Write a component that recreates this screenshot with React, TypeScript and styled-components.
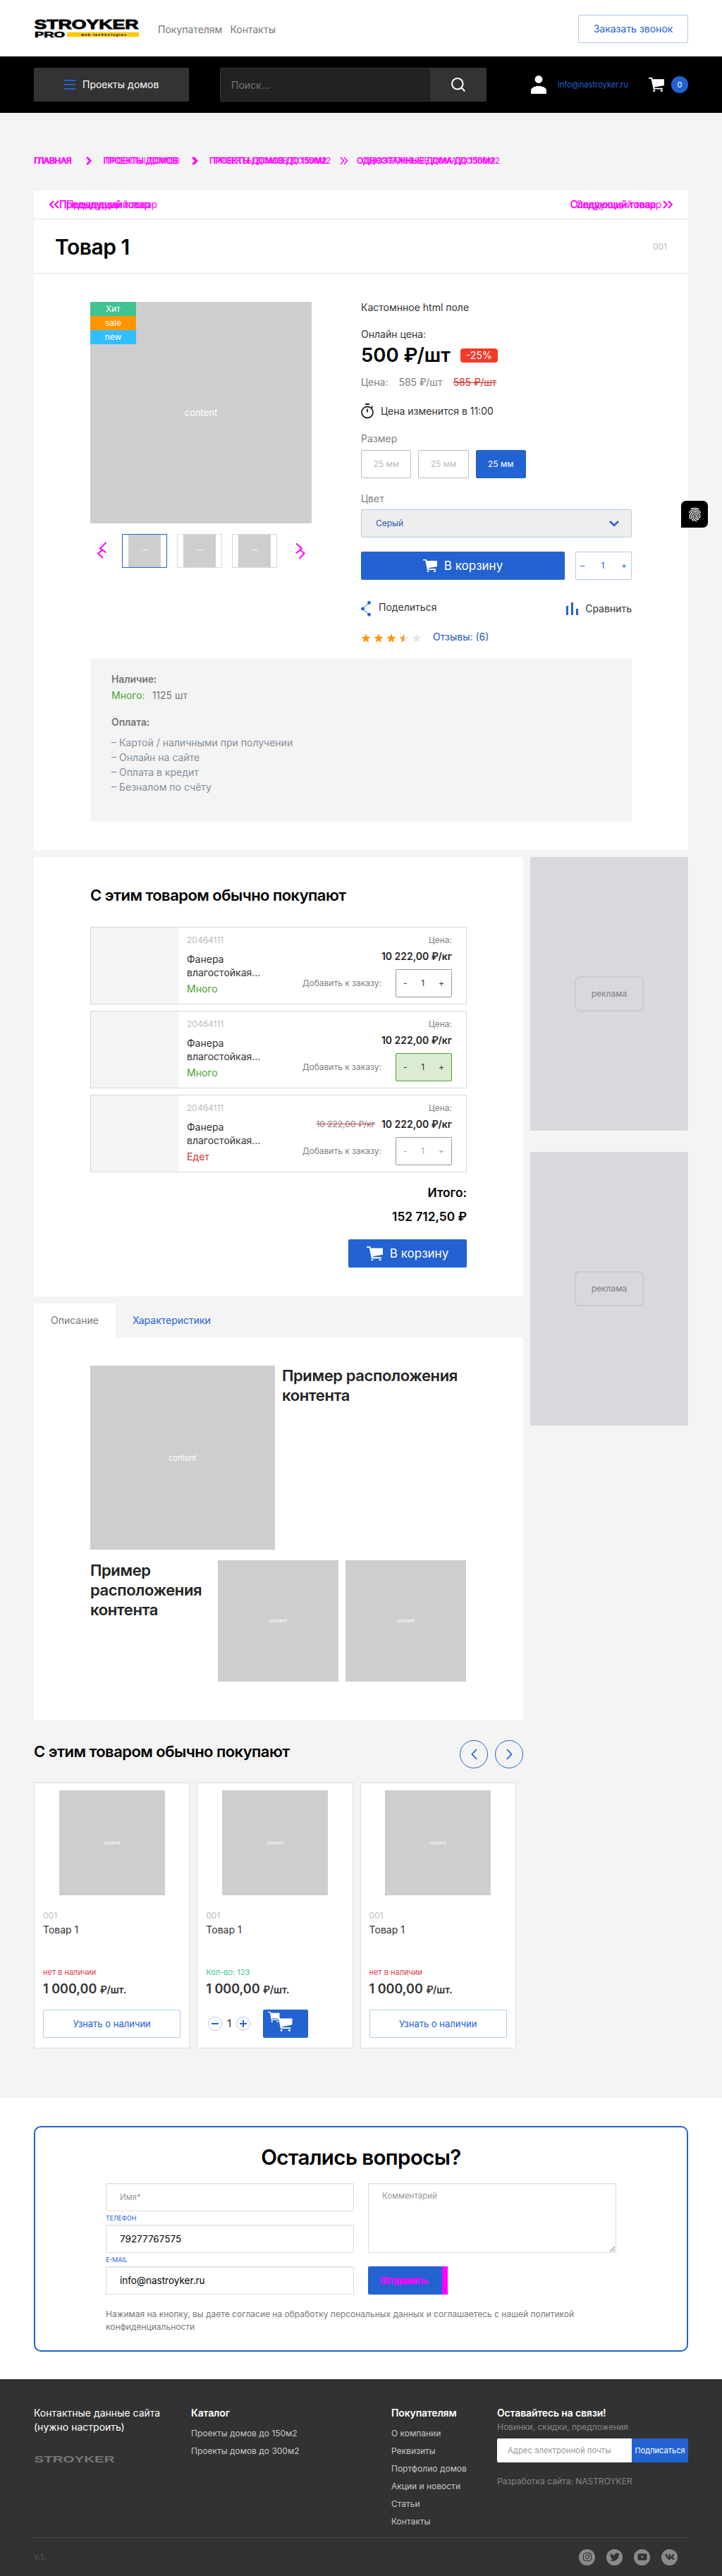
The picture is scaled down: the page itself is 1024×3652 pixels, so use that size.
import React from "react";
import styled, { createGlobalStyle, css } from "styled-components";
import { FaInstagram, FaTwitter, FaVk, FaYoutube } from "react-icons/fa";
import { IoFingerPrint } from "react-icons/io5";

const BLUE = "#2362d1";
const MAGENTA = "#ff00ff";

const GlobalStyle = createGlobalStyle`
  * { box-sizing: border-box; }
  body {
    margin: 0;
    background: #f4f4f4;
    font-family: Inter, "Noto Sans", sans-serif;
    font-size: 14px;
    line-height: 20px;
    color: #333;
  }
  input, textarea, button, select { font: inherit; }
  h1, h2, h3, p, ul { margin: 0; padding: 0; font-weight: inherit; }
  ul { list-style: none; }
`;

const Page = styled.div`
  position: relative;
  width: 1024px;
  height: 3652px;
  overflow: hidden;
  background: #f4f4f4;
`;

/* header */
const TopBar = styled.header`
  height: 80px;
  padding: 0 48px;
  background: #fff;
  display: flex;
  align-items: center;
`;
const LogoMark = styled.svg`
  overflow: visible;
  font-family: "Liberation Sans", Arial, sans-serif;
  font-weight: 700;
`;
const TopNav = styled.nav`
  display: flex;
  gap: 11px;
  margin-left: 26px;
  color: #777;
  padding-top: 3px;
`;
const OutlineButton = styled.button<{ $w?: string; $size?: number }>`
  width: ${(p) => p.$w || "100%"};
  height: 40px;
  padding: 0;
  border: 1px solid #b3c9e8;
  border-radius: 2px;
  background: #fff;
  color: ${BLUE};
  font-size: ${(p) => p.$size || 14}px;
`;
const CallSlot = styled.div`
  margin-left: auto;
  padding-top: 2px;
`;
const DarkBar = styled.div`
  height: 80px;
  padding: 0 48px;
  background: #000;
  display: flex;
  align-items: center;
`;
const MenuButton = styled.button`
  width: 220px;
  height: 48px;
  padding: 0 0 0 43px;
  border: 0;
  border-radius: 2px;
  background: #333;
  color: #fff;
  display: flex;
  align-items: center;
  gap: 10px;
`;
const Burger = styled.span`
  width: 16px;
  height: 14px;
  border-top: 2px solid ${BLUE};
  border-bottom: 2px solid ${BLUE};
  display: flex;
  align-items: center;
  &::after {
    content: "";
    width: 100%;
    height: 2px;
    background: ${BLUE};
  }
`;
const Search = styled.div`
  width: 378px;
  height: 48px;
  margin-left: 44px;
  border: 1px solid #333;
  border-radius: 2px;
  background: #222;
  display: flex;
`;
const SearchInput = styled.input`
  flex: 1;
  min-width: 0;
  padding: 2px 15px 0;
  border: 0;
  background: transparent;
  color: #fff;
  &::placeholder { color: #757575; opacity: 1; }
`;
const SearchButton = styled.span`
  width: 79px;
  background: #333;
  display: flex;
  align-items: center;
  justify-content: center;
`;
const UserBox = styled.div`
  margin-left: auto;
  display: flex;
  align-items: center;
`;
const Email = styled.span`
  margin: 0 28px 0 16px;
  width: 101px;
  font-size: 11.2px;
  color: ${BLUE};
`;
const Badge = styled.span`
  width: 24px;
  height: 24px;
  margin-left: 10px;
  border-radius: 50%;
  background: ${BLUE};
  color: #fff;
  font-size: 11px;
  line-height: 24px;
  text-align: center;
`;

/* breadcrumbs */
const Ghost = styled.span<{ $dx: number }>`
  color: ${MAGENTA};
  white-space: nowrap;
  letter-spacing: -0.33px;
  text-shadow: ${(p) => p.$dx}px 0 ${MAGENTA};
  -webkit-text-stroke: 0.5px ${MAGENTA};
`;
const Crumbs = styled.nav`
  height: 110px;
  padding: 25px 48px 0;
  display: grid;
  grid-template-columns: 74px 24.5px 125.5px 25px 185px 24px 1fr;
  align-items: center;
  font-size: 12px;
  line-height: 24px;
  svg { display: block; }
`;
const Panel = styled.section<{ $h: number }>`
  height: ${(p) => p.$h}px;
  background: #fff;
`;
const Container = styled.main`
  padding: 0 48px;
  height: 2704px;
`;
const NeighbourRow = styled.div`
  height: 41px;
  padding: 0 22px;
  border-bottom: 1px solid #e3e3e3;
  display: flex;
  justify-content: space-between;
  line-height: 38px;
`;
const NeighbourLink = styled.span<{ $gap: number }>`
  display: flex;
  align-items: center;
  gap: ${(p) => p.$gap}px;
`;
const TitleRow = styled.div`
  height: 77px;
  padding: 1px 30px 0;
  border-bottom: 1px solid #e3e3e3;
  display: flex;
  align-items: center;
  justify-content: space-between;
`;
const Title = styled.h1`
  font-size: 30px;
  font-weight: 600;
  letter-spacing: -0.5px;
  color: #000;
`;
const Sku = styled.span`
  font-size: 12px;
  color: #bbb;
`;
const ProductGrid = styled.div`
  padding: 40px 80px 0;
  display: grid;
  grid-template-columns: 314px 384px;
  column-gap: 70px;
`;
const Placeholder = styled.div<{ $w: number; $h: number; $size: number }>`
  width: ${(p) => p.$w}px;
  height: ${(p) => p.$h}px;
  flex: none;
  background: #cecece;
  color: #fff;
  font-size: ${(p) => p.$size}px;
  display: flex;
  align-items: center;
  justify-content: center;
`;
const MainPhoto = styled(Placeholder)`
  position: relative;
`;
const Stickers = styled.div`
  position: absolute;
  top: 0;
  left: 0;
  width: 65px;
`;
const Sticker = styled.div<{ $bg: string }>`
  height: 20px;
  background: ${(p) => p.$bg};
  color: #fff;
  font-size: 12px;
  line-height: 20px;
  text-align: center;
`;
const Thumbs = styled.div`
  margin-top: 15px;
  height: 48px;
  padding-left: 9px;
  display: flex;
  align-items: center;
`;
const ThumbList = styled.div`
  display: flex;
  gap: 14px;
  margin: 0 25px 0 21px;
`;
const Thumb = styled.div<{ $active?: boolean }>`
  width: 64px;
  height: 48px;
  border: 1px solid ${(p) => (p.$active ? BLUE : "#d5d7da")};
  display: flex;
  justify-content: center;
`;
const Info = styled.div`
  display: flex;
  flex-direction: column;
`;
const Row = styled.div<{ $mt?: number; $h?: number; $gap?: number; $color?: string }>`
  margin-top: ${(p) => p.$mt || 0}px;
  height: ${(p) => p.$h || 20}px;
  display: flex;
  align-items: center;
  gap: ${(p) => p.$gap || 0}px;
  color: ${(p) => p.$color || "inherit"};
  white-space: nowrap;
`;
const BigPrice = styled.span`
  font-size: 27.5px;
  font-weight: 600;
  color: #000;
`;
const Discount = styled.span`
  width: 53px;
  height: 20px;
  margin-top: 2px;
  border-radius: 4px;
  background: #f43b2b;
  color: #fff;
  line-height: 19px;
  text-align: center;
`;
const OldPrice = styled.s`
  color: #d0342c;
`;
const SizeButton = styled.span<{ $active?: boolean }>`
  width: 71.3px;
  height: 40px;
  border: 1px solid ${(p) => (p.$active ? BLUE : "#bbb")};
  border-radius: 2px;
  background: ${(p) => (p.$active ? BLUE : "#fff")};
  color: ${(p) => (p.$active ? "#fff" : "#bbb")};
  font-size: 12px;
  line-height: 37px;
  text-align: center;
`;
const Select = styled.div`
  margin-top: 5px;
  height: 40px;
  padding: 0 17px 0 20px;
  border: 1px solid #b3c9e8;
  border-radius: 2px;
  background: #eee;
  color: #2558b5;
  font-size: 12px;
  display: flex;
  align-items: center;
  justify-content: space-between;
`;
const CartButton = styled.button<{ $w: number }>`
  width: ${(p) => p.$w}px;
  height: 40px;
  padding: 0;
  border: 0;
  border-radius: 2px;
  background: ${BLUE};
  color: #fff;
  font-size: 17px;
  font-weight: 400;
  display: flex;
  align-items: center;
  justify-content: center;
  gap: 10px;
`;
const Stepper = styled.div<{ $tone?: "blue" | "green" | "muted" }>`
  width: 80px;
  height: 40px;
  padding: 0 10px;
  border: 1px solid #999;
  border-radius: 2px;
  color: #333;
  font-size: 12px;
  display: flex;
  align-items: center;
  justify-content: space-between;
  ${(p) => p.$tone === "blue" && css`
    padding: 0 6px;
    border-color: #b3c9e8;
    color: ${BLUE};
  `}
  ${(p) => p.$tone === "green" && css`
    border-color: #4aa332;
    background: #dbebd4;
  `}
  ${(p) => p.$tone === "muted" && css`
    color: #aaa;
  `}
`;
const Spread = styled(Row)`
  justify-content: space-between;
`;
const IconLabel = styled.span<{ $gap: number; $up?: number }>`
  display: flex;
  align-items: center;
  gap: ${(p) => p.$gap}px;
  span { margin-top: ${(p) => -(p.$up || 0)}px; }
`;
const Stars = styled.span`
  width: 102px;
  display: flex;
  gap: 4px;
`;
const Reviews = styled.span`
  margin-top: -2px;
  color: #2558b5;
`;
const Details = styled.div`
  grid-column: 1 / -1;
  width: 768px;
  height: 231px;
  margin-top: 20px;
  padding: 19px 30px;
  background: #f4f4f4;
  color: #777;
`;
const Strong = styled.div<{ $mt?: number }>`
  margin-top: ${(p) => p.$mt || 0}px;
  font-weight: 600;
  letter-spacing: -0.1px;
`;
const Stock = styled.div`
  margin-top: 3px;
  display: flex;
  gap: 10px;
`;
const Green = styled.span`
  color: #4aa332;
`;
const PayList = styled.ul`
  margin-top: 8px;
  color: #84909c;
  line-height: 21px;
`;

/* columns */
const Columns = styled.div`
  margin-top: 10px;
  display: grid;
  grid-template-columns: 694px 224px;
  column-gap: 10px;
`;
const AdColumn = styled.aside`
  display: flex;
  flex-direction: column;
  gap: 30px;
`;
const Ad = styled.div`
  height: 388px;
  border-radius: 2px;
  background: #d9d8df;
  display: flex;
  align-items: center;
  justify-content: center;
`;
const AdLabel = styled.span`
  width: 98px;
  height: 50px;
  border: 2px solid #cbcad0;
  border-radius: 7px;
  color: #808080;
  font-size: 12px;
  line-height: 46px;
  text-align: center;
`;
const Related = styled(Panel)`
  padding: 40px 80px 0;
`;
const Heading = styled.h2<{ $mt?: number }>`
  height: 28px;
  margin-top: ${(p) => p.$mt || 0}px;
  font-size: 22px;
  line-height: 28px;
  font-weight: 600;
  letter-spacing: -0.54px;
  color: #000;
  white-space: nowrap;
`;
const OrderList = styled.div`
  margin-top: 31px;
  width: 534px;
  display: grid;
  row-gap: 9px;
`;
const Order = styled.div`
  height: 110px;
  border: 1px solid #d5d7da;
  display: grid;
  grid-template-columns: 125px 130px 1fr;
`;
const OrderImage = styled.div`
  background: #f4f4f4;
`;
const OrderName = styled.div`
  padding: 8px 0 0 11px;
  line-height: 19px;
  white-space: nowrap;
`;
const OrderState = styled.div<{ $color: string }>`
  margin-top: 4px;
  color: ${(p) => p.$color};
`;
const OrderSku = styled.div`
  margin-bottom: 7px;
  font-size: 12px;
  line-height: 20px;
  color: #bbb;
`;
const OrderRight = styled.div`
  padding: 8px 20px 0 0;
  display: flex;
  flex-direction: column;
  align-items: flex-end;
  font-size: 12px;
  color: #808080;
  white-space: nowrap;
`;
const PriceLine = styled.div`
  height: 20px;
  margin: 3px 0 8px;
  display: flex;
  align-items: center;
  gap: 9px;
`;
const PriceNow = styled.b`
  font-size: 14px;
  font-weight: 600;
  color: #222;
`;
const WasPrice = styled.s`
  text-decoration-color: #d0342c;
`;
const AddLine = styled.div`
  display: flex;
  align-items: center;
  gap: 20px;
  color: #808080;
`;
const Totals = styled.div`
  width: 534px;
  margin-top: 19px;
  display: flex;
  flex-direction: column;
  align-items: flex-end;
`;
const Total = styled.div<{ $mt?: number; $mb?: number }>`
  height: 20px;
  margin-top: ${(p) => p.$mt || 0}px;
  margin-bottom: ${(p) => p.$mb || 0}px;
  font-size: 17.3px;
  font-weight: 600;
  color: #000;
`;
const Tabs = styled.div`
  margin-top: 10px;
  height: 48px;
  display: flex;
`;
const Tab = styled.div<{ $active?: boolean }>`
  padding: 0 24px;
  background: ${(p) => (p.$active ? "#fff" : "transparent")};
  color: ${(p) => (p.$active ? "#777" : BLUE)};
  line-height: 47px;
`;
const Description = styled(Panel)`
  padding: 40px 80px 0;
`;
const ContentRow = styled.div<{ $mb?: number }>`
  display: flex;
  gap: 10px;
  margin-bottom: ${(p) => p.$mb || 0}px;
`;
const ContentTitle = styled.h3<{ $w: number }>`
  width: ${(p) => p.$w}px;
  font-size: 22px;
  line-height: 28px;
  font-weight: 600;
  letter-spacing: -0.38px;
  color: #222;
`;
const CarouselHead = styled.div`
  height: 40px;
  margin-top: 28px;
  display: flex;
  justify-content: space-between;
`;
const Arrows = styled.div`
  display: flex;
  gap: 10px;
`;
const Arrow = styled.span`
  width: 40px;
  height: 40px;
  border: 1px solid ${BLUE};
  border-radius: 50%;
  display: flex;
  align-items: center;
  justify-content: center;
`;
const Cards = styled.div`
  margin-top: 20px;
  display: flex;
  gap: 10px;
`;
const Card = styled.article`
  width: 221.3px;
  height: 377px;
  padding: 10px 12px 0;
  border: 1px solid #dedede;
  background: #fff;
  display: flex;
  flex-direction: column;
`;
const CardImage = styled(Placeholder)`
  align-self: center;
`;
const CardState = styled.div<{ $color: string }>`
  margin-top: 40px;
  font-size: 11px;
  color: ${(p) => p.$color};
`;
const CardPrice = styled.div`
  margin: 4px 0 18px;
  font-size: 18px;
  line-height: 20px;
  font-weight: 600;
`;
const Unit = styled.span`
  font-size: 14px;
`;
const BuyRow = styled.div`
  height: 40px;
  padding-left: 3px;
  display: flex;
  align-items: center;
  gap: 7px;
  color: #222;
`;
const Round = styled.span`
  width: 20px;
  height: 20px;
  border: 1px solid #b3c9e8;
  border-radius: 50%;
  display: flex;
  align-items: center;
  justify-content: center;
`;
const MiniCart = styled.span`
  width: 64px;
  height: 40px;
  margin-left: 11px;
  padding: 3px 0 0 7px;
  border-radius: 2px;
  background: ${BLUE};
`;

/* questions form */
const FormSection = styled.section`
  height: 399px;
  padding: 40px 48px 0;
  background: #fff;
`;
const FormCard = styled.div`
  height: 320px;
  border: 2px solid ${BLUE};
  border-radius: 10px;
  padding: 24px 100px 0;
`;
const FormTitle = styled.h2`
  font-size: 29.5px;
  line-height: 36px;
  font-weight: 600;
  letter-spacing: -0.6px;
  color: #000;
  text-align: center;
`;
const FormGrid = styled.div`
  margin-top: 19px;
  width: 724px;
  display: grid;
  grid-template-columns: 352px 352px;
  column-gap: 20px;
`;
const fieldStyle = css`
  display: block;
  width: 100%;
  border: 1px solid #ddd;
  border-radius: 2px;
  background: #fff;
  box-shadow: inset 0 1px 2px rgba(0, 0, 0, 0.07);
  color: #000;
  outline: none;
  &::placeholder { color: #999; opacity: 1; font-size: 11.5px; }
`;
const Field = styled.input`
  ${fieldStyle}
  height: 40px;
  padding: 0 19px;
  font-size: 13.5px;
`;
const FieldTop = styled(Field)`
  padding-bottom: 3px;
`;
const Area = styled.textarea`
  ${fieldStyle}
  height: 99px;
  padding: 7px 19px;
  font-size: 11.5px;
`;
const Label = styled.div`
  height: 19px;
  font-size: 8.8px;
  line-height: 20px;
  color: ${BLUE};
`;
const Submit = styled.div`
  width: 113px;
  height: 40px;
  margin-top: 19px;
  padding-left: 17px;
  border-right: 8px solid ${MAGENTA};
  border-radius: 2px 0 0 2px;
  background: ${BLUE};
  font-size: 13px;
  line-height: 40px;
`;
const Consent = styled.p`
  width: 700px;
  margin-top: 19px;
  font-size: 12px;
  line-height: 18px;
  color: #777;
`;

/* footer */
const Footer = styled.footer`
  height: 279px;
  padding: 38px 48px 0;
  background: #323232;
  color: #fff;
`;
const FooterGrid = styled.div`
  height: 187px;
  border-bottom: 1px solid #484848;
  display: grid;
  grid-template-columns: 223px 284px 150px 271px;
`;
const FooterTitle = styled.div`
  font-weight: 600;
  letter-spacing: -0.15px;
`;
const FooterLinks = styled.ul`
  margin-top: 6px;
  font-size: 12px;
  line-height: 25px;
  color: #c6c6c6;
  white-space: nowrap;
`;
const Muted = styled.div<{ $mt?: number }>`
  margin-top: ${(p) => p.$mt || 0}px;
  font-size: 12px;
  line-height: 20px;
  color: #868686;
`;
const Subscribe = styled.div`
  margin-top: 6px;
  height: 34px;
  display: flex;
  font-size: 11.3px;
`;
const SubscribeField = styled.div`
  width: 191px;
  padding-left: 15px;
  border-radius: 2px 0 0 2px;
  background: #fff;
  color: #999;
  line-height: 34px;
`;
const SubscribeButton = styled.div`
  width: 80px;
  border-radius: 2px;
  background: ${BLUE};
  font-size: 11px;
  line-height: 35px;
  text-align: center;
`;
const FooterBottom = styled.div`
  height: 54px;
  padding-right: 15px;
  display: flex;
  align-items: center;
  justify-content: space-between;
  font-size: 12px;
  color: #555;
`;
const Socials = styled.div`
  display: flex;
  gap: 16px;
`;
const Social = styled.span`
  width: 23px;
  height: 23px;
  border-radius: 50%;
  background: #8a8a8a;
  color: #323232;
  font-size: 14px;
  display: flex;
  align-items: center;
  justify-content: center;
`;
const Widget = styled.div`
  position: absolute;
  left: 966px;
  top: 710px;
  width: 38px;
  height: 38px;
  border-radius: 7px 7px 7px 0;
  background: #000;
  color: #fff;
  display: flex;
  align-items: center;
  justify-content: center;
`;

const Logo = () => (
  <LogoMark width="150" height="26" viewBox="0 0 150 26">
    <text x="0.5" y="13.6" fontSize="18.6" textLength="148" lengthAdjust="spacingAndGlyphs" stroke="#000" strokeWidth="0.9">STROYKER</text>
    <text x="1" y="25.6" fontSize="10.6" textLength="43" lengthAdjust="spacingAndGlyphs" stroke="#000" strokeWidth="0.6">PRO</text>
    <rect x="47" y="18.7" width="102" height="6.6" fill="#ffcb05" />
    <text x="67" y="23.8" fontSize="5.4" textLength="64">web technologies</text>
  </LogoMark>
);

const Cart = ({ w = 22 }: { w?: number }) => (
  <svg width={w} height={(w * 20) / 22} viewBox="0 0 22 20" fill="#fff">
    <path d="M0 0h5l.6 2.3H22v8.9L8.2 13.6l.4 1.1H20v1.8H6.6L3.5 1.7H0z" />
    <circle cx="7.6" cy="18.5" r="1.5" />
    <circle cx="18.3" cy="18.5" r="1.5" />
  </svg>
);

const Chevron = ({ dx, double }: { dx: number; double?: boolean }) => (
  <svg width="16" height="12" viewBox="0 0 16 12" fill="none" stroke={MAGENTA} strokeWidth={double ? 1.5 : 2}>
    <path d="M1 1l4.5 5L1 11" />
    <path d="M1 1l4.5 5L1 11" transform={`translate(${dx} 0)`} />
  </svg>
);

const DoubleAngle = ({ flip }: { flip?: boolean }) => (
  <svg width="14" height="12" viewBox="0 0 14 12" fill="none" stroke={MAGENTA} strokeWidth="2">
    <path d={flip ? "M1 1l5 5-5 5M8 1l5 5-5 5" : "M6 1L1 6l5 5M13 1L8 6l5 5"} />
  </svg>
);

const Star = ({ fill }: { fill: number }) => (
  <svg width="14" height="13" viewBox="0 0 14 13">
    <defs>
      <linearGradient id={`star${fill}`}>
        <stop offset={fill} stopColor="#ff9500" />
        <stop offset={fill} stopColor="#e3e4e9" />
      </linearGradient>
    </defs>
    <path d="M7 0l1.7 4.7 5 .2-4 3.1 1.4 4.9L7 10.1l-4.1 2.8L4.3 8 .3 4.9l5-.2z" fill={`url(#star${fill})`} />
  </svg>
);

const orders = [
  { state: "Много", color: "#4aa332", tone: undefined, was: false },
  { state: "Много", color: "#4aa332", tone: "green" as const, was: false },
  { state: "Едет", color: "#c8342c", tone: "muted" as const, was: true },
];

const ProductCard = ({ inStock }: { inStock?: boolean }) => (
  <Card>
    <CardImage $w={150} $h={149} $size={6.5}>content</CardImage>
    <Row $mt={19}><Sku>001</Sku></Row>
    <Row>Товар 1</Row>
    <CardState $color={inStock ? "#3fc48f" : "#dc3f4f"}>{inStock ? "Кол-во: 123" : "нет в наличии"}</CardState>
    <CardPrice>1 000,00 <Unit>₽/шт.</Unit></CardPrice>
    {inStock ? (
      <BuyRow>
        <Round><svg width="10" height="10" stroke={BLUE} strokeWidth="2"><path d="M0 5h10" /></svg></Round>
        1
        <Round><svg width="10" height="10" stroke={BLUE} strokeWidth="2"><path d="M0 5h10M5 0v10" /></svg></Round>
        <MiniCart>
          <svg width="36" height="28" viewBox="0 0 36 28" fill="#fff">
            <g transform="scale(.75)">
              <path d="M0 0h5l.6 2.3H22v10.5H8.4l.3 1.4H20v1.8H6.6L3.5 1.7H0z" />
              <circle cx="7.6" cy="18.5" r="1.5" />
              <circle cx="18.3" cy="18.5" r="1.5" />
            </g>
            <g transform="translate(11.5 8)">
              <path d="M0 0h5l.6 1.5H23v8.9L8.2 13.2l.4 1.1H21v1.8H6.6L3.5 1.7H0z" />
              <circle cx="7.6" cy="18.3" r="1.5" />
              <circle cx="18.8" cy="18.3" r="1.5" />
            </g>
          </svg>
        </MiniCart>
      </BuyRow>
    ) : (
      <OutlineButton $size={13}>Узнать о наличии</OutlineButton>
    )}
  </Card>
);

export default function App() {
  return (
    <Page>
      <GlobalStyle />
      <TopBar>
        <Logo />
        <TopNav><span>Покупателям</span><span>Контакты</span></TopNav>
        <CallSlot><OutlineButton $w="156px">Заказать звонок</OutlineButton></CallSlot>
      </TopBar>
      <DarkBar>
        <MenuButton><Burger />Проекты домов</MenuButton>
        <Search>
          <SearchInput placeholder="Поиск..." />
          <SearchButton>
            <svg width="20" height="20" viewBox="0 0 20 20" fill="none" stroke="#fff" strokeWidth="2">
              <circle cx="8.8" cy="8.8" r="7.8" />
              <path d="M14.3 14.3l5 5" />
            </svg>
          </SearchButton>
        </Search>
        <UserBox>
          <svg width="22" height="26" viewBox="0 0 22 26" fill="#fff">
            <circle cx="11" cy="5.5" r="5.4" />
            <path d="M0 26v-4.500C0 17.500 5 15 11 15s11 2.500 11 6.500V26z" />
          </svg>
          <Email>info@nastroyker.ru</Email>
          <Cart />
          <Badge>0</Badge>
        </UserBox>
      </DarkBar>

      <Crumbs>
        <Ghost $dx={0.7}>ГЛАВНАЯ</Ghost>
        <Chevron dx={1} />
        <Ghost $dx={3}>ПРОЕКТЫ ДОМОВ</Ghost>
        <Chevron dx={2} />
        <Ghost $dx={6}>ПРОЕКТЫ ДОМОВ ДО 150М2</Ghost>
        <Chevron dx={5} double />
        <Ghost $dx={7}>ОДНОЭТАЖНЫЕ ДОМА ДО 150М2</Ghost>
      </Crumbs>

      <Container>
        <Panel $h={935}>
          <NeighbourRow>
            <NeighbourLink $gap={0}><DoubleAngle /><Ghost $dx={10}>Предыдущий товар</Ghost></NeighbourLink>
            <NeighbourLink $gap={10}><Ghost $dx={8}>Следующий товар</Ghost><DoubleAngle flip /></NeighbourLink>
          </NeighbourRow>
          <TitleRow><Title>Товар 1</Title><Sku>001</Sku></TitleRow>
          <ProductGrid>
            <div>
              <MainPhoto $w={314} $h={314} $size={13}>
                content
                <Stickers>
                  <Sticker $bg="#42c391">Хит</Sticker>
                  <Sticker $bg="#ff9500">sale</Sticker>
                  <Sticker $bg="#32bfff">new</Sticker>
                </Stickers>
              </MainPhoto>
              <Thumbs>
                <svg width="15" height="38" viewBox="0 -5 15 38" fill="none" stroke={MAGENTA} strokeWidth="2">
                  <path d="M13.500 2L5 10.500l8.500 6" />
                  <path d="M9 12L2 17.500 9 24" />
                </svg>
                <ThumbList>
                  <Thumb $active><Placeholder $w={46} $h={46} $size={2.5}>content</Placeholder></Thumb>
                  <Thumb><Placeholder $w={46} $h={46} $size={2.5}>content</Placeholder></Thumb>
                  <Thumb><Placeholder $w={46} $h={46} $size={2.5}>content</Placeholder></Thumb>
                </ThumbList>
                <svg width="15" height="38" viewBox="0 -5 15 38" fill="none" stroke={MAGENTA} strokeWidth="2">
                  <path d="M2 3.500l8 7-8 7" />
                  <path d="M7 12l6.500 5.500L6.500 25" />
                </svg>
              </Thumbs>
            </div>
            <Info>
              <Row $h={16}>Кастомнное html поле</Row>
              <Row $mt={20}>Онлайн цена:</Row>
              <Row $mt={1} $h={36} $gap={14}><BigPrice>500 ₽/шт</BigPrice><Discount>-25%</Discount></Row>
              <Row $mt={11} $gap={15} $color="#808080"><span>Цена:</span><span>585 ₽/шт</span><OldPrice>585 ₽/шт</OldPrice></Row>
              <Row $mt={20} $h={22} $gap={10}>
                <svg width="18" height="22" viewBox="0 0 18 22" fill="none" stroke="#222" strokeWidth="1.8">
                  <circle cx="9" cy="12.500" r="8" />
                  <path d="M6 1h6M9 7.500v5M14.500 6l2-2" />
                </svg>
                Цена изменится в 11:00
              </Row>
              <Row $mt={18} $color="#808080">Размер</Row>
              <Row $mt={6} $h={40} $gap={10}><SizeButton>25 мм</SizeButton><SizeButton>25 мм</SizeButton><SizeButton $active>25 мм</SizeButton></Row>
              <Row $mt={19} $color="#808080">Цвет</Row>
              <Select>
                Серый
                <svg width="14" height="9" viewBox="0 0 14 9" fill="none" stroke={BLUE} strokeWidth="2.6"><path d="M1 1l6 6 6-6" /></svg>
              </Select>
              <Spread $mt={20} $h={40}>
                <CartButton $w={289}><Cart w={20} />В корзину</CartButton>
                <Stepper $tone="blue"><span>–</span><span>1</span><span>+</span></Stepper>
              </Spread>
              <Spread $mt={30} $h={22}>
                <IconLabel $gap={11} $up={4}>
                  <svg width="14" height="22" viewBox="0 0 14 22" fill={BLUE} stroke={BLUE}>
                    <path d="M11.500 2.500L2.500 11l9 8.500" fill="none" />
                    <circle cx="11.500" cy="2.500" r="2" />
                    <circle cx="2.500" cy="11" r="2" />
                    <circle cx="11.500" cy="19.300" r="2" />
                  </svg>
                  <span>Поделиться</span>
                </IconLabel>
                <IconLabel $gap={10}>
                  <svg width="17" height="18" fill={BLUE}><path d="M0 5h3v13H0zM7 0h3v18H7zM14 9h3v9h-3z" /></svg>
                  <span>Сравнить</span>
                </IconLabel>
              </Spread>
              <Row $mt={20}>
                <Stars>
                  <Star fill={1} /><Star fill={1} /><Star fill={1} /><Star fill={0.5} /><Star fill={0} />
                </Stars>
                <Reviews>Отзывы: (6)</Reviews>
              </Row>
            </Info>
            <Details>
              <Strong>Наличие:</Strong>
              <Stock><Green>Много:</Green><span>1125 шт</span></Stock>
              <Strong $mt={18}>Оплата:</Strong>
              <PayList>
                <li>– Картой / наличными при получении</li>
                <li>– Онлайн на сайте</li>
                <li>– Оплата в кредит</li>
                <li>– Безналом по счёту</li>
              </PayList>
            </Details>
          </ProductGrid>
        </Panel>

        <Columns>
          <div>
            <Related $h={623}>
              <Heading>С этим товаром обычно покупают</Heading>
              <OrderList>
                {orders.map((o, i) => (
                  <Order key={i}>
                    <OrderImage />
                    <OrderName>
                      <OrderSku>20464111</OrderSku>
                      Фанера<br />влагостойкая...
                      <OrderState $color={o.color}>{o.state}</OrderState>
                    </OrderName>
                    <OrderRight>
                      <div>Цена:</div>
                      <PriceLine>
                        {o.was && <WasPrice>10 222,00 ₽/кг</WasPrice>}
                        <PriceNow>10 222,00 ₽/кг</PriceNow>
                      </PriceLine>
                      <AddLine>
                        Добавить к заказу:
                        <Stepper $tone={o.tone}><span>-</span><span>1</span><span>+</span></Stepper>
                      </AddLine>
                    </OrderRight>
                  </Order>
                ))}
              </OrderList>
              <Totals>
                <Total>Итого:</Total>
                <Total $mt={14} $mb={22}>152 712,50 ₽</Total>
                <CartButton $w={168}><Cart w={23} />В корзину</CartButton>
              </Totals>
            </Related>
            <Tabs><Tab $active>Описание</Tab><Tab>Характеристики</Tab></Tabs>
            <Description $h={543}>
              <ContentRow $mb={15}>
                <Placeholder $w={262} $h={261} $size={11}>content</Placeholder>
                <ContentTitle $w={262}>Пример расположения контента</ContentTitle>
              </ContentRow>
              <ContentRow>
                <ContentTitle $w={171}>Пример расположения контента</ContentTitle>
                <Placeholder $w={171} $h={172} $size={7}>content</Placeholder>
                <Placeholder $w={171} $h={172} $size={7}>content</Placeholder>
              </ContentRow>
            </Description>
            <CarouselHead>
              <Heading $mt={2}>С этим товаром обычно покупают</Heading>
              <Arrows>
                <Arrow><svg width="9" height="16" fill="none" stroke={BLUE} strokeWidth="1.8"><path d="M8 1L1.500 8 8 15" /></svg></Arrow>
                <Arrow><svg width="9" height="16" fill="none" stroke={BLUE} strokeWidth="1.8"><path d="M1 1l6.500 7L1 15" /></svg></Arrow>
              </Arrows>
            </CarouselHead>
            <Cards><ProductCard /><ProductCard inStock /><ProductCard /></Cards>
          </div>
          <AdColumn><Ad><AdLabel>реклама</AdLabel></Ad><Ad><AdLabel>реклама</AdLabel></Ad></AdColumn>
        </Columns>
      </Container>

      <FormSection>
        <FormCard>
          <FormTitle>Остались вопросы?</FormTitle>
          <FormGrid>
            <div>
              <FieldTop placeholder="Имя*" />
              <Label>ТЕЛЕФОН</Label>
              <Field defaultValue="79277767575" />
              <Label>E-MAIL</Label>
              <Field defaultValue="info@nastroyker.ru" />
            </div>
            <div>
              <Area placeholder="Комментарий" />
              <Submit><Ghost $dx={4}>Отправить</Ghost></Submit>
            </div>
          </FormGrid>
          <Consent>Нажимая на кнопку, вы даете согласие на обработку персональных данных и соглашаетесь с нашей политикой конфиденциальности</Consent>
        </FormCard>
      </FormSection>

      <Footer>
        <FooterGrid>
          <div>
            Контактные данные сайта<br />(нужно настроить)
            <Muted $mt={27}>
              <LogoMark width="115" height="12">
                <text x="0.500" y="10.500" fontSize="13" textLength="114" lengthAdjust="spacingAndGlyphs" fill="#777">STROYKER</text>
              </LogoMark>
            </Muted>
          </div>
          <div>
            <FooterTitle>Каталог</FooterTitle>
            <FooterLinks><li>Проекты домов до 150м2</li><li>Проекты домов до 300м2</li></FooterLinks>
          </div>
          <div>
            <FooterTitle>Покупателям</FooterTitle>
            <FooterLinks>
              <li>О компании</li><li>Реквизиты</li><li>Портфолио домов</li>
              <li>Акции и новости</li><li>Статьи</li><li>Контакты</li>
            </FooterLinks>
          </div>
          <div>
            <FooterTitle>Оставайтесь на связи!</FooterTitle>
            <Muted>Новинки, скидки, предложения</Muted>
            <Subscribe>
              <SubscribeField>Адрес электронной почты</SubscribeField>
              <SubscribeButton>Подписаться</SubscribeButton>
            </Subscribe>
            <Muted $mt={17}>Разработка сайта: NASTROYKER</Muted>
          </div>
        </FooterGrid>
        <FooterBottom>
          v.1.
          <Socials>
            <Social><FaInstagram /></Social>
            <Social><FaTwitter /></Social>
            <Social><FaYoutube /></Social>
            <Social><FaVk /></Social>
          </Socials>
        </FooterBottom>
      </Footer>
      <Widget><IoFingerPrint size={21} /></Widget>
    </Page>
  );
}
